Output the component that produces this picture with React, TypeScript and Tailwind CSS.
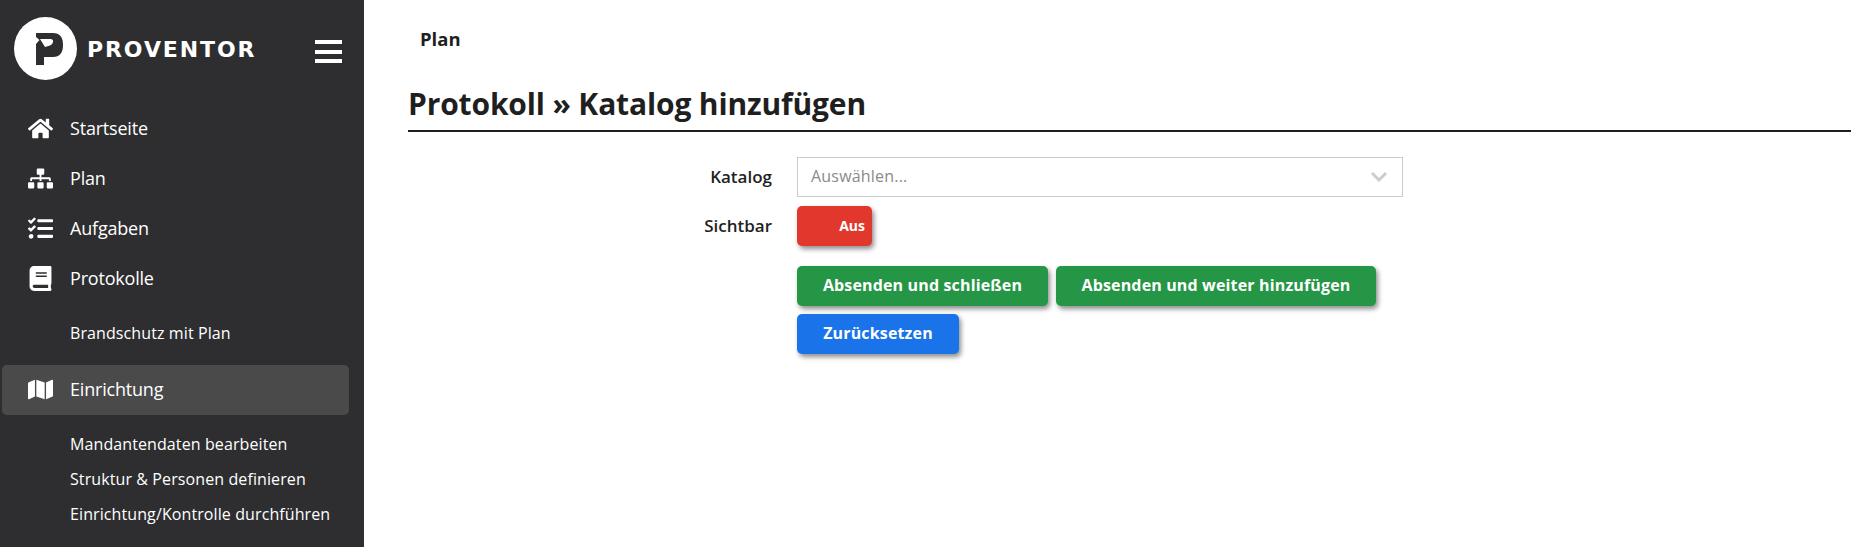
import React from "react";
import { FaHome, FaSitemap, FaTasks, FaBook, FaMap } from "react-icons/fa";

function Main({ icon, label, active }: { icon: React.ReactNode; label: string; active?: boolean }) {
  return (
    <div className={"mx-[2px] flex h-[50px] w-[347px] shrink-0 items-center rounded-[5px] pb-[2px] " + (active ? "bg-[#4a4a4b]" : "")}>
      <div className="flex w-[68px] justify-center pl-[8px] text-[25px] text-white">{icon}</div>
      <span className="text-[18px] tracking-[-0.2px] text-white">{label}</span>
    </div>
  );
}

function Sub({ label, h }: { label: string; h: string }) {
  return (
    <div className={"flex shrink-0 items-center pl-[70px] text-[16px] tracking-[0.1px] text-white " + h}>{label}</div>
  );
}

const btn = "h-[40px] rounded-[5px] pb-[2px] text-[16px] font-bold tracking-[0.15px] text-white shadow-[2px_3px_5px_rgba(0,0,0,0.45)]";

export default function App() {
  return (
    <div className="flex h-[547px] w-[1851px] overflow-hidden bg-white font-['Open_Sans',sans-serif]">
      <aside className="flex h-full w-[364px] shrink-0 flex-col bg-[#2e2e30]">
        <div className="flex h-[104px] shrink-0 items-start pl-[14px] pr-[22px] pt-[17px]">
          <div className="h-[63px] w-[63px] overflow-hidden rounded-full bg-white">
            <svg viewBox="14 17 63 63" className="h-[63px] w-[63px]">
              <path d="M36 33H53Q63 33 63 45Q63 57 53 57H44V65H36V44L39.500 40L36 37z" fill="#2e2e30" />
              <path d="M40 39H51Q53.500 39.500 53 42Q52.500 45 50 45.500L45 47z" fill="#ffffff" />
            </svg>
          </div>
          <span className="ml-[10px] mt-[18px] font-['DejaVu_Sans',sans-serif] text-[22px] leading-[30px] font-bold tracking-[1.9px] text-white">PROVENTOR</span>
          <div className="ml-auto mt-[23px] flex w-[27px] flex-col gap-[5.5px]">
            <div className="h-[4px] bg-white" />
            <div className="h-[4px] bg-white" />
            <div className="h-[4px] bg-white" />
          </div>
        </div>
        <Main icon={<FaHome />} label="Startseite" />
        <Main icon={<FaSitemap />} label="Plan" />
        <Main icon={<FaTasks />} label="Aufgaben" />
        <Main icon={<FaBook />} label="Protokolle" />
        <Sub label="Brandschutz mit Plan" h="h-[61px] pb-[3px]" />
        <Main icon={<FaMap />} label="Einrichtung" active />
        <div className="h-[11px] shrink-0" />
        <Sub label="Mandantendaten bearbeiten" h="h-[35px]" />
        <Sub label="Struktur & Personen definieren" h="h-[35px]" />
        <Sub label="Einrichtung/Kontrolle durchführen" h="h-[36px]" />
      </aside>
      <main className="flex min-w-0 flex-1 flex-col pl-[44px] text-[#1f1f1f]">
        <div className="flex h-[79px] shrink-0 items-center pb-[1px] pl-[12px] text-[18.500px] font-bold">Plan</div>
        <h1 className="h-[53px] shrink-0 border-b-2 border-[#1f1f1f] text-[30px] leading-[50px] font-bold tracking-[-0.15px]">Protokoll » Katalog hinzufügen</h1>
        <div className="mt-[25px] grid w-fit grid-cols-[345px_606px] gap-x-[25px] pl-[19px]">
          <label className="flex h-[40px] items-center justify-end text-[17px] font-semibold">Katalog</label>
          <div className="flex h-[40px] items-center justify-between border border-[#cccccc] pb-[3px] pl-[13px] pr-[15px] text-[16px] tracking-[0.2px] text-[#8a8a8a]">
            <span>Auswählen...</span>
            <svg viewBox="0 0 16 10" className="mt-[3px] h-[10px] w-[16px]" fill="none" stroke="#cccccc" strokeWidth="3">
              <path d="M1 1l7 7 7-7" />
            </svg>
          </div>
          <label className="mt-[9px] flex h-[40px] items-center justify-end text-[17px] font-semibold">Sichtbar</label>
          <div className="mt-[9px] flex h-[40px] w-[75px] items-center justify-end rounded-[5px] bg-[#e1372c] pb-[1px] pr-[7px] text-[14px] font-bold text-white shadow-[2px_3px_5px_rgba(0,0,0,0.45)]">Aus</div>
          <div />
          <div className="mt-[20px] flex w-[640px] flex-wrap gap-x-[8px] gap-y-[8px]">
            <button className={btn + " w-[251px] bg-[#259645]"}>Absenden und schließen</button>
            <button className={btn + " w-[320px] bg-[#259645]"}>Absenden und weiter hinzufügen</button>
            <button className={btn + " w-[162px] bg-[#1a73e8]"}>Zurücksetzen</button>
          </div>
        </div>
      </main>
    </div>
  );
}
